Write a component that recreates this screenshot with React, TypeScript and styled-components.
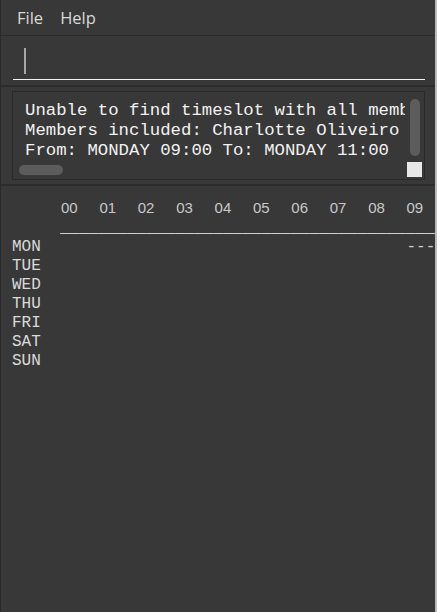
import React from "react";
import styled, { createGlobalStyle } from "styled-components";

const Global = createGlobalStyle`
  html, body { margin: 0; padding: 0; background: #bcbcbc; }
  #root { width: 437px; height: 612px; }
`;

const Window = styled.div`
  width: 434px;
  height: 612px;
  background: #383838;
  border-left: 1px solid #2a2a2a;
  display: flex;
  flex-direction: column;
  overflow: hidden;
`;

const MenuBar = styled.div`
  height: 35px;
  flex: none;
  border-bottom: 1px solid #2b2b2b;
  display: flex;
  align-items: center;
  padding-left: 16px;
  gap: 17px;
  font-family: "Open Sans", "Noto Sans", sans-serif;
  font-size: 16.5px;
  color: #d8d8d8;
`;

const MenuItem = styled.span`
  line-height: 22px;
`;

const CommandPane = styled.div`
  flex: none;
  height: 49px;
  padding: 0 10px 0 12px;
  border-bottom: 2px solid #2b2b2b;
`;

const CommandField = styled.div`
  height: 44px;
  border-bottom: 1px solid #f2f2f2;
  padding: 12px 0 0 11px;
  box-sizing: border-box;
`;

const Caret = styled.div`
  width: 2px;
  height: 26px;
  background: #a6a6a6;
`;

const ResultPane = styled.div`
  flex: none;
  padding: 4px 10px 4px 11px;
  border-bottom: 2px solid #2b2b2b;
`;

const ResultBox = styled.div`
  height: 87px;
  border: 1px solid #2a2a2a;
  display: grid;
  grid-template-columns: 1fr 19px;
  grid-template-rows: 69px 18px;
`;

const ResultText = styled.div`
  padding: 9px 0 0 12px;
  overflow: hidden;
  white-space: pre;
  font-family: "Liberation Mono", monospace;
  font-size: 17.33px;
  line-height: 20px;
  color: #f2f2f2;
`;

const VScroll = styled.div`
  padding: 7px 0 0 5px;
`;

const VThumb = styled.div`
  width: 10px;
  height: 57px;
  border-radius: 5px;
  background: #5c5c5c;
`;

const HScroll = styled.div`
  padding: 4px 0 0 6px;
`;

const HThumb = styled.div`
  width: 44px;
  height: 10px;
  border-radius: 5px;
  background: #5c5c5c;
`;

const Corner = styled.div`
  padding: 1px 0 0 2px;
`;

const CornerBox = styled.div`
  width: 15px;
  height: 15px;
  background: #e8e8e8;
`;

const Timetable = styled.div`
  flex: 1;
  padding: 12px 0 0 11px;
  display: grid;
  grid-template-columns: 49px repeat(24, 38.4px);
  grid-template-rows: 19px 21px;
  grid-auto-rows: 19px;
  align-content: start;
  overflow: hidden;
`;

const HourLabel = styled.div`
  font-family: "Liberation Sans", Arial, sans-serif;
  font-size: 15px;
  line-height: 19px;
  color: #c8c8c8;
  white-space: nowrap;
`;

const Rule = styled.div`
  grid-column: 2 / -1;
  margin-left: -1px;
  padding-top: 2px;
  font-family: "Liberation Mono", monospace;
  font-size: 16px;
  line-height: 19px;
  color: #d0d0d0;
  white-space: pre;
  overflow: hidden;
`;

const DayLabel = styled.div`
  grid-column: 1;
  font-family: "Liberation Mono", monospace;
  font-size: 16px;
  line-height: 19px;
  color: #dadada;
  white-space: pre;
`;

const Slot = styled.div<{ $start: number; $span: number }>`
  grid-column: ${(p) => p.$start + 2} / span ${(p) => p.$span};
  font-family: "Liberation Mono", monospace;
  font-size: 16px;
  line-height: 19px;
  color: #d0d0d0;
  white-space: pre;
  overflow: hidden;
`;

const hours = Array.from({ length: 24 }, (_, i) => String(i).padStart(2, "0"));
const days = ["MON", "TUE", "WED", "THU", "FRI", "SAT", "SUN"];
const slots: Record<string, { start: number; span: number }[]> = {
  MON: [{ start: 9, span: 2 }],
};

export default function App() {
  return (
    <>
      <Global />
      <Window>
        <MenuBar>
          <MenuItem>File</MenuItem>
          <MenuItem>Help</MenuItem>
        </MenuBar>
        <CommandPane>
          <CommandField>
            <Caret />
          </CommandField>
        </CommandPane>
        <ResultPane>
          <ResultBox>
            <ResultText>
              {"Unable to find timeslot with all members available.\nMembers included: Charlotte Oliveiro\nFrom: MONDAY 09:00 To: MONDAY 11:00"}
            </ResultText>
            <VScroll>
              <VThumb />
            </VScroll>
            <HScroll>
              <HThumb />
            </HScroll>
            <Corner>
              <CornerBox />
            </Corner>
          </ResultBox>
        </ResultPane>
        <Timetable>
          <div />
          {hours.map((h) => (
            <HourLabel key={h}>{h}</HourLabel>
          ))}
          <Rule>{"_".repeat(100)}</Rule>
          {days.map((d, i) => (
            <React.Fragment key={d}>
              <DayLabel style={{ gridRow: i + 3 }}>{d}</DayLabel>
              {(slots[d] || []).map((s) => (
                <Slot
                  key={s.start}
                  $start={s.start}
                  $span={s.span}
                  style={{ gridRow: i + 3 }}
                >
                  {"-".repeat(8)}
                </Slot>
              ))}
            </React.Fragment>
          ))}
        </Timetable>
      </Window>
    </>
  );
}
